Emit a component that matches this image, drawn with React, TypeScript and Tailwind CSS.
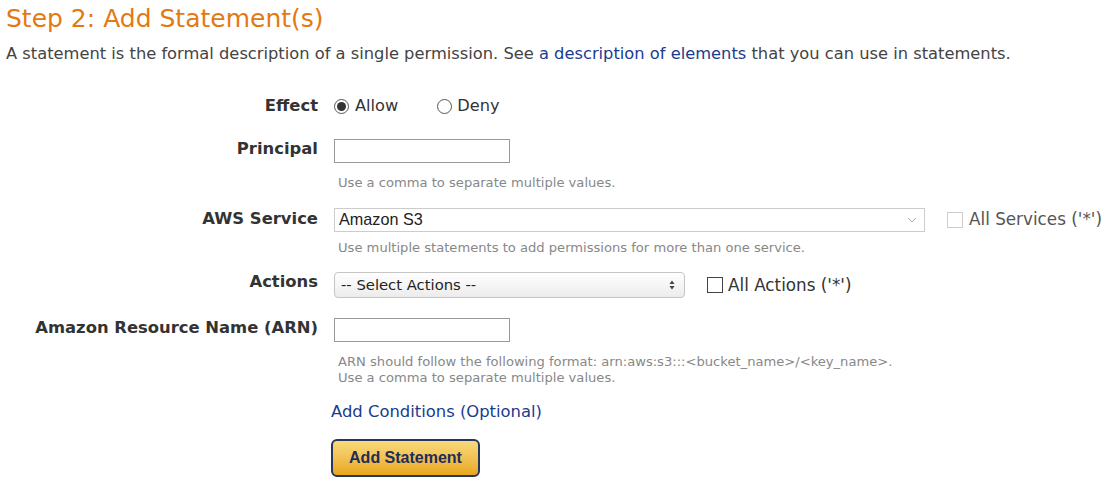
import React from "react";

function Label({ children, lift = "-translate-y-[2px]" }: { children: React.ReactNode; lift?: string }) {
  return (
    <div className={"w-[318px] shrink-0 text-right font-bold text-[16.4px] leading-[22px] text-[#333] " + lift}>{children}</div>
  );
}

function Hint({ children }: { children: React.ReactNode }) {
  return <div className="text-[13.1px] leading-[16px] text-[#888] whitespace-nowrap">{children}</div>;
}

export default function App() {
  return (
    <div className="bg-white w-[1116px] h-[489px] overflow-hidden text-[#333] font-['DejaVu_Sans',Verdana,sans-serif]">
      <h2 className="pl-[6px] pt-[4px] text-[25px] leading-[30px] text-[#e47911] font-normal whitespace-nowrap">
        Step 2: Add Statement(s)
      </h2>
      <p className="pl-[6px] mt-[9px] text-[16.3px] leading-[22px] text-[#444] whitespace-nowrap">
        A statement is the formal description of a single permission. See{" "}
        <a className="text-[#1a3c8f]">a description of elements</a> that you can use in statements.
      </p>

      {/* Effect */}
      <div className="flex items-center gap-[16px] mt-[29px] h-[24px]">
        <Label lift="translate-y-0">Effect</Label>
        <div className="flex items-center text-[16.2px]">
          <span className="w-[15px] h-[15px] rounded-full border border-[#555] flex items-center justify-center">
            <span className="w-[9px] h-[9px] rounded-full bg-[#333]" />
          </span>
          <span className="ml-[6px]">Allow</span>
          <span className="ml-[39px] w-[15px] h-[15px] rounded-full border border-[#555]" />
          <span className="ml-[5px]">Deny</span>
        </div>
      </div>

      {/* Principal */}
      <div className="flex items-center gap-[16px] mt-[21px]">
        <Label>Principal</Label>
        <div className="w-[176px] h-[24px] border border-[#999]" />
      </div>
      <div className="pl-[338px] mt-[12px]">
        <Hint>Use a comma to separate multiple values.</Hint>
      </div>

      {/* AWS Service */}
      <div className="flex items-center gap-[16px] mt-[16px]">
        <Label lift="-translate-y-[1px]">AWS Service</Label>
        <div className="w-[591px] h-[24px] border border-[#ccc] flex items-center justify-between pl-[4px] pr-[7px]">
          <span className="text-[16.2px] text-[#222] font-['Liberation_Sans',Arial,sans-serif]">Amazon S3</span>
          <svg width="10" height="6" viewBox="0 0 10 6"><path d="M1 1l4 4 4-4" fill="none" stroke="#b0b0b0" strokeWidth="1" /></svg>
        </div>
        <div className="ml-[6px] flex items-center">
          <span className="w-[16px] h-[16px] border border-[#ccc]" />
          <span className="ml-[6px] text-[16.8px] text-[#555] whitespace-nowrap">All Services ('*')</span>
        </div>
      </div>
      <div className="pl-[338px] mt-[8px]">
        <Hint>Use multiple statements to add permissions for more than one service.</Hint>
      </div>

      {/* Actions */}
      <div className="flex items-center gap-[16px] mt-[16px]">
        <Label lift="-translate-y-[3px]">Actions</Label>
        <div className="w-[351px] h-[26px] rounded-[4px] border border-[#c5c5c5] bg-gradient-to-b from-white to-[#ececec] flex items-center justify-between pl-[6px] pr-[9px]">
          <span className="text-[14.8px] text-[#222]">-- Select Actions --</span>
          <svg width="6" height="10" viewBox="0 0 6 10"><path d="M3 0.5L5.5 4H0.5z M3 9.5L5.5 6H0.5z" fill="#444" /></svg>
        </div>
        <div className="ml-[6px] flex items-center">
          <span className="w-[16px] h-[16px] border border-[#444]" />
          <span className="ml-[5px] text-[16.8px] text-[#333] whitespace-nowrap">All Actions ('*')</span>
        </div>
      </div>

      {/* ARN */}
      <div className="flex items-center gap-[16px] mt-[20px]">
        <Label>Amazon Resource Name (ARN)</Label>
        <div className="w-[176px] h-[24px] border border-[#999]" />
      </div>
      <div className="pl-[338px] mt-[12px]">
        <Hint>ARN should follow the following format: arn:aws:s3:::&lt;bucket_name&gt;/&lt;key_name&gt;.</Hint>
        <Hint>Use a comma to separate multiple values.</Hint>
      </div>

      <div className="pl-[331px] mt-[15px] text-[16.4px] leading-[22px] text-[#1a3c8f] whitespace-nowrap">Add Conditions (Optional)</div>

      <div className="pl-[331px] mt-[16px]">
        <div className="w-[149px] h-[38px] rounded-[6px] border-2 border-[#26365e] bg-gradient-to-b from-[#f8da7a] to-[#e9a817] flex items-center justify-center text-[16px] font-bold text-[#1f2d5a] font-['Liberation_Sans',Arial,sans-serif]">
          Add Statement
        </div>
      </div>
    </div>
  );
}
